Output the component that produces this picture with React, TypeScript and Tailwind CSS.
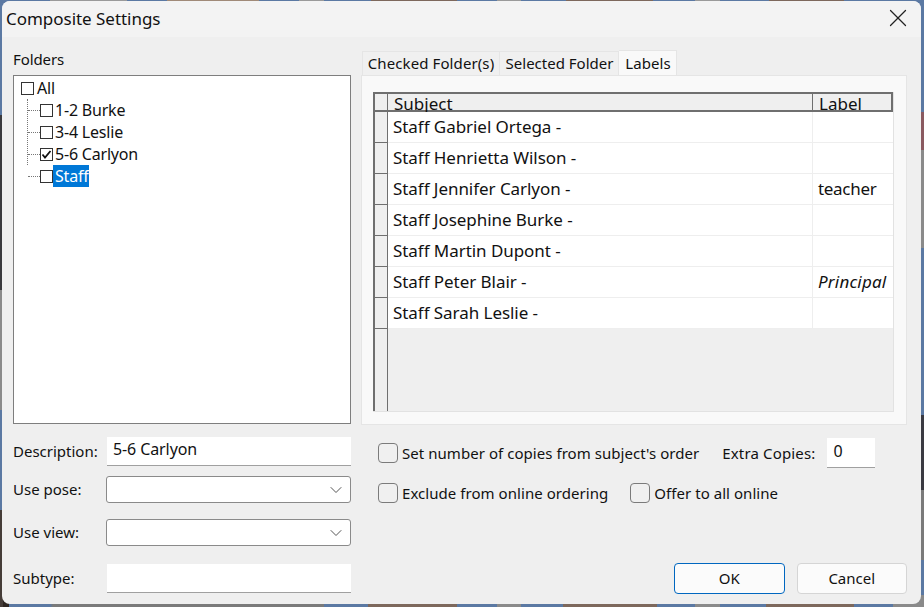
import { ChevronDown, X } from "lucide-react";

const font = "font-['Noto_Sans','Open_Sans',sans-serif]";

const folders = [
  { name: "1-2 Burke", checked: false, selected: false },
  { name: "3-4 Leslie", checked: false, selected: false },
  { name: "5-6 Carlyon", checked: true, selected: false },
  { name: "Staff", checked: false, selected: true },
];

const subjects = [
  { name: "Staff Gabriel Ortega -", label: "" },
  { name: "Staff Henrietta Wilson -", label: "" },
  { name: "Staff Jennifer Carlyon -", label: "teacher" },
  { name: "Staff Josephine Burke -", label: "" },
  { name: "Staff Martin Dupont -", label: "" },
  { name: "Staff Peter Blair -", label: "Principal", italic: true },
  { name: "Staff Sarah Leslie -", label: "" },
];

function TreeBox({ checked }: { checked: boolean }) {
  return (
    <span className="flex h-[13px] w-[13px] shrink-0 items-center justify-center border border-[#333] bg-white">
      {checked && (
        <svg viewBox="0 0 11 11" className="h-[11px] w-[11px]">
          <path d="M1.5 5.5 L4 8.5 L9.5 2" fill="none" stroke="#111" strokeWidth="1.8" />
        </svg>
      )}
    </span>
  );
}

function Check({ label }: { label: string }) {
  return (
    <div className="flex h-[20px] items-center gap-[4px]">
      <span className="h-[20px] w-[20px] rounded-[4px] border border-[#7b7b7b] bg-[#f0f0f0]" />
      <span className="text-[15px] tracking-[0.05px] text-[#111]">{label}</span>
    </div>
  );
}

function Combo() {
  return (
    <div className="-ml-px flex h-[27px] w-[245px] items-center justify-end rounded-[3px] border border-[#8a8a8a] bg-white pr-[4px]">
      <ChevronDown size={20} strokeWidth={1.2} className="text-[#555]" />
    </div>
  );
}

function FieldLabel({ children }: { children: string }) {
  return <span className="w-[94px] text-[15px] text-[#111]">{children}</span>;
}

export default function App() {
  return (
    <div className={`relative h-[607px] w-[924px] overflow-hidden bg-[#5b79a3] ${font}`}>
      {/* wallpaper showing round the window */}
      <div className="absolute inset-x-0 top-0 h-[10px] bg-[linear-gradient(90deg,#5b79a3_0_50px,#9a9a9a_50px_127px,#5b79a3_127px_167px,#a08a78_167px_259px,#5b79a3_259px_299px,#9a9a9a_299px_324px,#5b79a3_324px_371px,#7d685c_371px_457px,#5b79a3_457px_497px,#9a9a9a_497px_521px,#5b79a3_521px_566px,#7d685c_566px_653px,#5b79a3_653px_695px,#9a9a9a_695px_720px,#5b79a3_720px_769px,#7d685c_769px_844px,#5b79a3_844px)]" />
      <div className="absolute inset-x-0 bottom-0 h-[12px] bg-[linear-gradient(90deg,#2e2622_0_9px,#5b79a3_9px_50px,#7a7a7a_53px_324px,#5b79a3_324px_368px,#7d685c_368px_457px,#5b79a3_457px_497px,#8a8a8a_497px_521px,#5b79a3_521px_563px,#7d685c_563px_657px,#5b79a3_657px_695px,#8a8a8a_695px_720px,#5b79a3_720px_766px,#7d685c_766px_854px,#5b79a3_854px_893px,#8a8a8a_893px)]" />
      <div className="absolute left-0 top-[115px] h-[175px] w-[3px] bg-[#3a3a3e]" />
      <div className="absolute left-0 top-[290px] h-[120px] w-[3px] bg-[#8a8a8a]" />
      <div className="absolute left-0 top-[510px] h-[97px] w-[3px] bg-[#453c38]" />
      <div className="absolute right-0 top-[112px] h-[38px] w-[4px] bg-[#8a5a60]" />
      <div className="absolute right-0 top-[150px] h-[98px] w-[4px] bg-[#8a8a8a]" />
      <div className="absolute right-0 top-[415px] h-[75px] w-[4px] bg-[#3a3a42]" />
      <div className="absolute right-0 top-[490px] h-[70px] w-[4px] bg-[#7a7a7a]" />

      {/* dialog window */}
      <div className="absolute left-[2px] top-[1px] flex h-[603px] w-[919px] flex-col overflow-hidden rounded-lg bg-[#efefef]">
        <div className="flex h-[36px] shrink-0 items-center justify-between bg-[#f3f3f3] pl-[4px] pr-[8px]">
          <span className="text-[17px] tracking-[-0.03px] text-[#111]">Composite Settings</span>
          <X size={30} strokeWidth={1} className="-mt-[2px] text-[#222]" />
        </div>

        <div className="flex flex-1">
          {/* left column */}
          <div className="ml-[11px] flex w-[338px] shrink-0 flex-col">
            <div className="flex h-[38px] items-end pb-[5px] text-[15px] tracking-[-0.1px] text-[#111]">Folders</div>
            <div className="h-[349px] border border-[#7e7e7e] bg-white pl-[7px] pt-[1px] text-[16px] leading-[22px] tracking-[-0.2px] text-[#111]">
              <div className="flex h-[22px] items-center gap-[3px]">
                <TreeBox checked={false} />
                <span>All</span>
              </div>
              <div className="relative">
                <div className="absolute left-[6px] top-0 h-[66px] border-l border-dotted border-[#777]" />
                {folders.map((f) => (
                  <div key={f.name} className="flex h-[22px] items-center pl-[7px]">
                    <span className="w-[12px] border-t border-dotted border-[#777]" />
                    <TreeBox checked={f.checked} />
                    {f.selected ? (
                      <span className="bg-[#0078d7] pl-[2px] text-white">{f.name}</span>
                    ) : (
                      <span className="pl-[2px]">{f.name}</span>
                    )}
                  </div>
                ))}
              </div>
            </div>

            <div className="mt-[13px] flex items-center">
              <FieldLabel>Description:</FieldLabel>
              <div className="flex h-[29px] w-[244px] items-start border-b border-[#a0a0a0] bg-white pl-[6px] text-[16px] tracking-[-0.1px] text-[#111]">
                5-6 Carlyon
              </div>
            </div>
            <div className="mt-[10px] flex items-center">
              <FieldLabel>Use pose:</FieldLabel>
              <Combo />
            </div>
            <div className="mt-[16px] flex items-center">
              <FieldLabel>Use view:</FieldLabel>
              <Combo />
            </div>
            <div className="mt-[18px] flex items-center">
              <FieldLabel>Subtype:</FieldLabel>
              <div className="h-[29px] w-[244px] border-b border-[#a0a0a0] bg-white" />
            </div>
          </div>

          {/* right column */}
          <div className="ml-[10px] flex w-[546px] shrink-0 flex-col">
            <div className="mt-[13px] flex h-[25px] items-end pl-[1px] text-[15px] text-[#111]">
              <div className="flex h-[24px] w-[138px] items-center justify-center border border-b-0 border-[#e5e5e5] bg-[#f0f0f0] tracking-[0.1px]">Checked Folder(s)</div>
              <div className="flex h-[24px] w-[119px] items-center justify-center border border-b-0 border-l-0 border-[#e5e5e5] bg-[#f0f0f0] pl-[1px]">Selected Folder</div>
              <div className="flex h-[25px] w-[58px] items-center justify-center border border-b-0 border-l-0 border-[#e5e5e5] bg-[#f9f9f9] pl-[1px] tracking-[0.1px]">Labels</div>
            </div>

            <div className="h-[350px] border border-[#e5e5e5] bg-[#f9f9f9] pl-[11px] pt-[16px]">
              <div className="flex h-[320px] w-[521px] flex-col border-b border-r border-[#e2e2e2] text-[#111]">
                <div className="flex flex-1 flex-col border-l-[2px] border-t-[2px] border-[#6f6f6f] bg-[#efefef]">
                  <div className="flex h-[18px] shrink-0 border-b-[2px] border-[#6f6f6f] text-[17px] leading-[20px]">
                    <div className="w-[13px] shrink-0 border-r border-[#6f6f6f]" />
                    <div className="w-[424px] shrink-0 pl-[6px]">Subject</div>
                    <div className="flex-1 border-l border-r-[2px] border-[#6f6f6f] pl-[6px]">Label</div>
                  </div>
                  <div className="flex flex-1">
                    <div className="w-[13px] shrink-0 border-r border-[#6f6f6f]">
                      {subjects.map((s) => (
                        <div key={s.name} className="h-[31px] border-b border-[#6f6f6f]" />
                      ))}
                    </div>
                    <div className="flex-1">
                      {subjects.map((s) => (
                        <div key={s.name} className="flex h-[31px] items-center border-b border-[#eeeeee] bg-white text-[17px] tracking-[-0.05px]">
                          <div className="w-[424px] shrink-0 pl-[5px]">{s.name}</div>
                          <div className={`flex h-full flex-1 items-center border-l border-[#eeeeee] pl-[5px] ${s.italic ? "italic tracking-[0.2px]" : "tracking-[-0.3px]"}`}>{s.label}</div>
                        </div>
                      ))}
                    </div>
                  </div>
                </div>
              </div>
            </div>

            <div className="ml-[17px] mt-[13px] flex items-center">
              <Check label="Set number of copies from subject's order" />
              <span className="ml-[23px] text-[15px] tracking-[0.15px] text-[#111]">Extra Copies:</span>
              <div className="ml-[12px] h-[30px] w-[48px] border-b border-[#a0a0a0] bg-white pl-[6px] pt-[1px] text-[16px] text-[#111]">0</div>
            </div>
            <div className="ml-[17px] mt-[15px] flex items-center gap-[22px]">
              <Check label="Exclude from online ordering" />
              <Check label="Offer to all online" />
            </div>
            <div className="ml-[313px] mt-[60px] flex gap-[12px] text-[15px] text-[#111]">
              <div className="flex h-[31px] w-[111px] items-center justify-center rounded-[4px] border border-[#0067c0] bg-[#fbfbfb]">OK</div>
              <div className="flex h-[31px] w-[111px] items-center justify-center rounded-[4px] border border-[#d5d5d5] bg-[#fbfbfb]">Cancel</div>
            </div>
          </div>
        </div>
      </div>
    </div>
  );
}
